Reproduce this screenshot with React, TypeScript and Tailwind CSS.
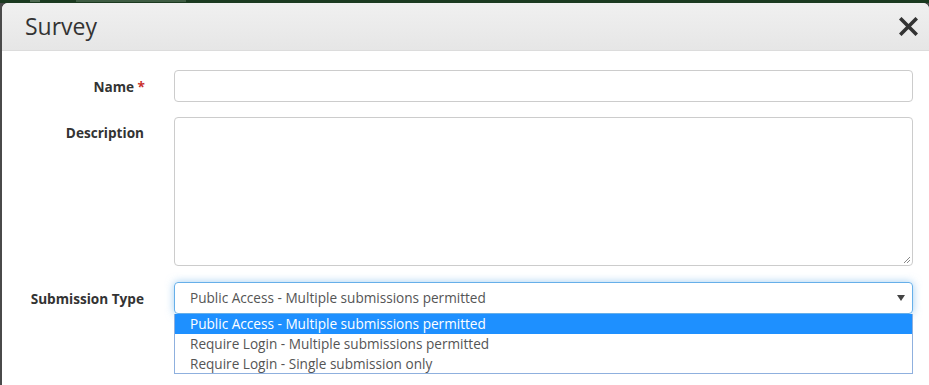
export default function App() {
  const options = [
    "Public Access - Multiple submissions permitted",
    "Require Login - Multiple submissions permitted",
    "Require Login - Single submission only",
  ];
  return (
    <div className="w-[929px] h-[385px] overflow-hidden bg-[#1b3a20] flex flex-col font-['Open_Sans',sans-serif]">
      <div className="h-[3px] shrink-0 flex items-start gap-[14px] pl-[30px]">
        <div className="w-[10px] h-[2px] bg-[#4f6a52]" />
        <div className="ml-[22px] w-[110px] h-[2px] bg-[#3f5c43]" />
      </div>
      <div className="flex-1 flex bg-[#4a4a4a] pl-[2px]">
        <div className="flex-1 bg-white rounded-t-[6px] flex flex-col">
          <div className="h-[48px] shrink-0 rounded-t-[6px] bg-gradient-to-b from-[#f0f0f0] to-[#e6e6e6] border-b border-[#dcdcdc] flex items-center justify-between pl-[23px] pr-[11px]">
            <span className="text-[23px] text-[#333] leading-none -mt-[1px]">Survey</span>
            <svg width="19" height="19" viewBox="0 0 19 19">
              <path d="M2.5 2.5 L16.5 16.5 M16.5 2.5 L2.5 16.5" stroke="#333" strokeWidth="3.6" strokeLinecap="square" />
            </svg>
          </div>
          <div className="grid grid-cols-[143px_1fr] gap-x-[29px] pt-[19px] pr-[16px] text-[13.6px]">
            <label className="text-right font-bold text-[#333] pt-[7px]">
              Name <span className="text-[#c9302c]">*</span>
            </label>
            <div className="h-[32px] border border-[#ccc] rounded-[4px]" />

            <label className="text-right font-bold text-[#333] pt-[21px] pr-[1px]">Description</label>
            <div className="mt-[15px] h-[149px] border border-[#ccc] rounded-[4px] relative">
              <svg width="9" height="9" viewBox="0 0 9 9" className="absolute right-[1px] bottom-[1px]">
                <path d="M8 2 L2 8 M8 5 L5 8" stroke="#888" strokeWidth="1" />
              </svg>
            </div>

            <label className="text-right font-bold text-[#333] pt-[23px] pr-[1px]">Submission Type</label>
            <div className="mt-[16px] flex flex-col">
              <div className="h-[32px] border border-[#66afe9] rounded-[4px] shadow-[0_0_8px_rgba(102,175,233,0.6)] flex items-center justify-between pl-[15px] pr-[7px] text-[#555]">
                <span>{options[0]}</span>
                <svg width="8" height="6" viewBox="0 0 8 6">
                  <path d="M0 0 H8 L4 6 Z" fill="#444" />
                </svg>
              </div>
              <div className="border border-[#8fb0de] border-t-0 flex flex-col">
                {options.map((o, i) => (
                  <div
                    key={o}
                    className={
                      i === 0
                        ? "h-[20px] leading-[20px] pl-[15px] bg-[#1e90ff] text-white"
                        : "h-[19.5px] leading-[19.5px] pl-[15px] text-[#555]"
                    }
                  >
                    {o}
                  </div>
                ))}
              </div>
            </div>
          </div>
        </div>
      </div>
    </div>
  );
}
